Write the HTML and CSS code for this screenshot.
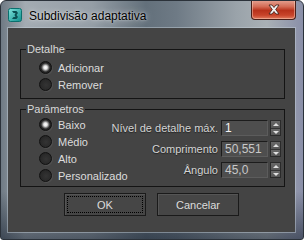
FILE: index.html
```html
<!DOCTYPE html>
<html lang="pt">
<head>
    <meta charset="UTF-8">
    <title>Subdivisão adaptativa</title>
    <link rel="stylesheet" href="styles.css">
</head>
<body>
    <div class="window">
        <div class="titlebar">
            <svg class="app-icon" width="14" height="14" viewBox="0 0 14 14">
                <defs>
                    <linearGradient id="ic" x1="0" y1="0" x2="1" y2="1">
                        <stop offset="0" stop-color="#7fe3dc"/>
                        <stop offset="1" stop-color="#0e8f8c"/>
                    </linearGradient>
                </defs>
                <rect x="0.5" y="0.5" width="13" height="13" rx="2" fill="url(#ic)" stroke="#0b6f6d"/>
                <path d="M4 3 L8.5 3 L10 5 L8.5 7 L10 9 L8.5 11 L4 11 L5.5 9 L7.5 9 L6.5 7 L7.5 5 L5.5 5 Z" fill="#0a4f52"/>
            </svg>
            <span class="title">Subdivisão adaptativa</span>
            <div class="close-btn">
                <svg width="14" height="11" viewBox="0 0 14 11">
                    <path d="M2 1 L5 1 L7 3.5 L9 1 L12 1 L8.7 5.5 L12 10 L9 10 L7 7.5 L5 10 L2 10 L5.3 5.5 Z" fill="#f4f4f4" stroke="#3b1a12" stroke-width="0.8"/>
                </svg>
            </div>
        </div>
        <div class="client">
            <fieldset class="group group-detail">
                <legend>Detalhe</legend>
                <div class="radio-list">
                    <label class="radio checked"><span class="dot"></span>Adicionar</label>
                    <label class="radio"><span class="dot"></span>Remover</label>
                </div>
            </fieldset>
            <fieldset class="group group-params">
                <legend>Parâmetros</legend>
                <div class="params">
                    <div class="radio-list">
                        <label class="radio checked"><span class="dot"></span>Baixo</label>
                        <label class="radio"><span class="dot"></span>Médio</label>
                        <label class="radio"><span class="dot"></span>Alto</label>
                        <label class="radio"><span class="dot"></span>Personalizado</label>
                    </div>
                    <div class="fields">
                        <span class="field-label">Nível de detalhe máx.</span>
                        <span class="field-input bright">1</span>
                        <span class="spinner"><span class="up"></span><span class="down"></span></span>

                        <span class="field-label">Comprimento</span>
                        <span class="field-input">50,551</span>
                        <span class="spinner"><span class="up"></span><span class="down"></span></span>

                        <span class="field-label">Ângulo</span>
                        <span class="field-input">45,0</span>
                        <span class="spinner"><span class="up"></span><span class="down"></span></span>
                    </div>
                </div>
            </fieldset>
            <div class="buttons">
                <button class="btn btn-ok"><span class="focus">OK</span></button>
                <button class="btn">Cancelar</button>
            </div>
        </div>
    </div>
</body>
</html>
```

FILE: styles.css
```css
body {
    margin: 0;
    padding: 0;
    background: #ffffff;
    font-family: 'Liberation Sans', Arial, sans-serif;
    font-size: 11px;
}
.window {
    width: 304px;
    height: 240px;
    box-sizing: border-box;
    border: 1px solid #2b323a;
    border-radius: 6px 6px 3px 3px;
    background:
        linear-gradient(to bottom, rgba(0, 0, 0, 0) 0%, rgba(0, 0, 0, 0) 80%, rgba(20, 30, 45, 0.55) 100%),
        linear-gradient(to right, #6f7a84 0%, #a3abb2 8%, #959ea6 30%, #63707b 48%, #6e7a85 58%, #9aa3aa 78%, #a9b0b5 88%, #8a8fa8 100%);
    overflow: hidden;
}
.titlebar {
    height: 27px;
    display: flex;
    align-items: flex-start;
    padding: 0 7px 0 7px;
}
.app-icon {
    margin-top: 7px;
    flex: none;
}
.title {
    margin-left: 7px;
    margin-top: 8px;
    font-size: 12px;
    line-height: 14px;
    color: #000;
    text-shadow: 0 0 6px rgba(255, 255, 255, 0.7), 0 0 2px rgba(255, 255, 255, 0.6);
}
.close-btn {
    margin-left: auto;
    margin-top: -1px;
    width: 45px;
    height: 20px;
    box-sizing: border-box;
    border: 1px solid #4a1f18;
    border-top: none;
    border-radius: 0 0 4px 4px;
    background: linear-gradient(to bottom, #e6a595 0%, #d36b55 35%, #b8321b 55%, #c8442a 80%, #e07a5e 100%);
    box-shadow: inset 0 0 0 1px rgba(255, 220, 200, 0.45);
    display: flex;
    align-items: center;
    justify-content: center;
}
.client {
    margin-left: 7px;
    width: 287px;
    height: 204px;
    box-sizing: border-box;
    padding: 15px 10px 0 12px;
    background: #444444;
    box-shadow: 0 0 0 1px rgba(200, 210, 220, 0.45);
}
.group {
    margin: 0;
    padding: 0;
    min-width: 0;
    border: 1px solid #141414;
    color: #d8d8d8;
}
.group legend {
    margin-left: 5px;
    padding: 0 1px;
    line-height: 13px;
    color: #d8d8d8;
}
.radio-list {
    display: flex;
    flex-direction: column;
    padding-left: 18px;
    white-space: nowrap;
}
.group-detail .radio-list {
    padding-top: 3px;
    padding-bottom: 5px;
}
.group-params {
    margin-top: 4px;
}
.params {
    display: flex;
    padding-bottom: 2px;
}
.params .radio-list {
    width: 72px;
    flex: none;
}
.radio {
    display: flex;
    align-items: center;
    height: 17px;
    color: #dcdcdc;
}
.dot {
    width: 11px;
    height: 11px;
    border-radius: 50%;
    border: 1px solid #111;
    background: radial-gradient(circle at 55% 55%, #343434 0%, #2a2a2a 55%, #1c1c1c 100%);
    box-shadow: 1px 1px 0 rgba(110, 110, 110, 0.3);
    margin-right: 6px;
    flex: none;
}
.radio.checked .dot {
    background: radial-gradient(circle at 50% 50%, #ffffff 0%, #e8e8e8 22%, #8a8a8a 38%, #262626 58%, #1c1c1c 100%);
}
.fields {
    margin-left: auto;
    margin-right: 3px;
    padding-top: 4px;
    display: grid;
    grid-template-columns: auto 47px 11px;
    grid-auto-rows: 16px;
    row-gap: 5px;
    column-gap: 2px;
    align-self: flex-start;
}
.field-label {
    text-align: right;
    line-height: 16px;
    white-space: nowrap;
    color: #d4d4d4;
    padding-right: 1px;
    text-shadow: 0 1px 1px rgba(0, 0, 0, 0.5);
}
.field-input {
    box-sizing: border-box;
    border: 1px solid #1c1c1c;
    border-right-color: #5c5c5c;
    border-bottom-color: #5c5c5c;
    background: #4e4e4e;
    color: #c8c8c8;
    font-size: 12px;
    line-height: 14px;
    padding-left: 3px;
}
.field-input.bright {
    color: #f2f2f2;
}
.spinner {
    display: flex;
    flex-direction: column;
    box-sizing: border-box;
    border: 1px solid #2a2a2a;
    background: #5a5a5a;
}
.spinner .up,
.spinner .down {
    flex: 1;
    position: relative;
    background: linear-gradient(to bottom, #686868, #555555);
}
.spinner .up {
    border-bottom: 1px solid #333;
}
.spinner .up::after,
.spinner .down::after {
    content: '';
    position: absolute;
    left: 2px;
    width: 0;
    height: 0;
    border-left: 3px solid transparent;
    border-right: 3px solid transparent;
}
.spinner .up::after {
    top: 2px;
    border-bottom: 3px solid #e0e0e0;
}
.spinner .down::after {
    top: 2px;
    border-top: 3px solid #e0e0e0;
}
.buttons {
    display: flex;
    justify-content: center;
    gap: 11px;
    margin-top: 6px;
    padding-right: 2px;
}
.btn {
    width: 82px;
    height: 23px;
    box-sizing: border-box;
    border: 1px solid #1a1a1a;
    background: #464646;
    color: #dcdcdc;
    font-family: 'Liberation Sans', Arial, sans-serif;
    font-size: 11px;
    padding: 2px;
    box-shadow: inset 1px 1px 0 #555555;
}
.btn-ok .focus {
    display: flex;
    align-items: center;
    justify-content: center;
    height: 100%;
    box-sizing: border-box;
    border: 1px dotted #000;
}
```
